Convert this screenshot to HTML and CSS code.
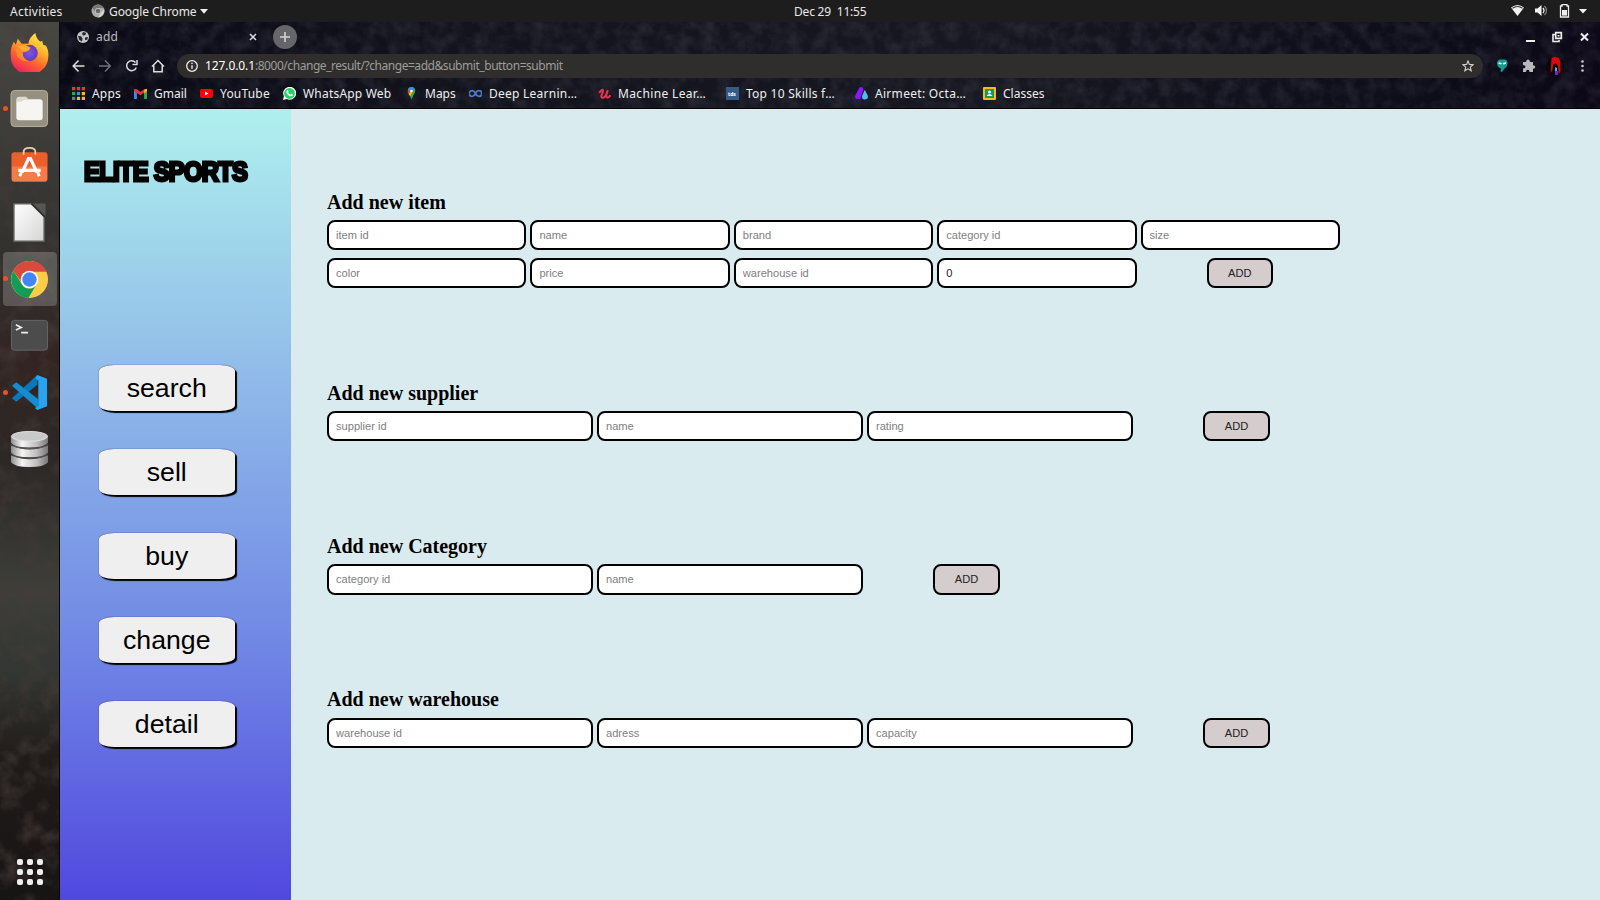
FILE: index.html
```html
<!DOCTYPE html>
<html lang="en">
<head>
<meta charset="utf-8">
<title>add</title>
<link rel="stylesheet" href="styles.css">
</head>
<body>
<div class="desktop">
  <header class="topbar">
    <span class="activities">Activities</span>
    <svg class="app-icon" viewBox="0 0 14 14"><circle cx="7" cy="7" r="6.5" fill="#aaa"/><path d="M1.4 3.8A6.5 6.5 0 0 1 12.7 4H7L4.5 8.7z" fill="#777"/><path d="M13 5a6.5 6.5 0 0 1-6 8.500l3-5z" fill="#d2d2d2"/><circle cx="7" cy="7" r="3" fill="#c9c9c9"/><circle cx="7" cy="7" r="2.300" fill="#686868"/></svg>
    <span class="app-name">Google Chrome</span>
    <svg class="app-arrow" viewBox="0 0 8 5"><path d="M0 0h8L4 4.800z" fill="#f0f0f0"/></svg>
    <span class="clock">Dec 29&nbsp; 11:55</span>
    <svg class="tray" viewBox="0 0 80 16">
      <path d="M1 4.500Q7.500-.5 14 4.500L7.500 13z" fill="#f2f2f2"/><path d="M2.500 5.300Q7.500 1.700 12.500 5.300" fill="none" stroke="#333" stroke-width="1.100"/>
      <path d="M25 5.500h2.500L31.500 2v11l-4-3.500H25z" fill="#f2f2f2"/><path d="M33 5q2 2.500 0 5" fill="none" stroke="#eee" stroke-width="1.300"/><path d="M34.500 3q4 4.500 0 9" fill="none" stroke="#888" stroke-width="1.200"/>
      <path d="M52 1.700h5v1.300h1.500v11h-8V3H52z" fill="none" stroke="#eee" stroke-width="1.300"/><path d="M52 7h5v5.600h-5z" fill="#eee"/>
      <path d="M69 6h8l-4 4.500z" fill="#f2f2f2"/>
    </svg>
  </header>
  <div class="workspace">
    <nav class="dock">
      <svg class="texture" width="59" height="878"><filter id="stone" x="0" y="0" width="1" height="1"><feTurbulence type="fractalNoise" baseFrequency=".05" numOctaves="5" seed="8"/><feColorMatrix values="0 0 0 0 .06  0 0 0 0 .045  0 0 0 0 .04  1.600 0 0 0 -.72"/></filter><rect width="59" height="878" filter="url(#stone)"/></svg>
      <div class="slot"><svg viewBox="0 0 40 40"><defs><linearGradient id="ff" x1=".8" y1="0" x2=".3" y2="1"><stop offset="0" stop-color="#fff04a"/><stop offset=".35" stop-color="#ffb52b"/><stop offset=".65" stop-color="#ff642d"/><stop offset="1" stop-color="#ed1b67"/></linearGradient><radialGradient id="fp"><stop offset="0" stop-color="#7d55f0"/><stop offset="1" stop-color="#673ab7"/></radialGradient></defs><path d="M4 9l2 3 2-6 4 5 7 0q0-6 7-11 1 6 5 9l2-1 1 4 3 1q3 5 2.300 11A19 18.500 0 0 1 .8 24Q0 15 4 9z" fill="url(#ff)"/><circle cx="20" cy="20.500" r="8.500" fill="url(#fp)"/><path d="M6 14q4-3 9-2l6 3q-1 4-8 5 0 7 7 9-9 1-13-6z" fill="#ff8a2d"/><path d="M8 13q7-2 13 2-1 3-8 4z" fill="#ffab38"/></svg></div>
      <div class="slot"><i class="dot"></i><svg viewBox="0 0 40 40"><rect x="1" y="1.500" width="37.500" height="37" rx="4" fill="#969080" stroke="#b7b09d"/><rect x="6.500" y="10.500" width="27" height="21.500" rx="3" fill="#f6f5f2"/><path d="M6.500 12V11q0-3 3-3h7l3 3h-5q-2 2-4 2h-4z" fill="#dedad0"/></svg></div>
      <div class="slot bag"><svg viewBox="0 0 40 40"><rect x="1.500" y="7.500" width="37" height="30" rx="3" fill="#ec5f2b"/><path d="M2 22h36v13q0 2.500-3 2.500H4q-2 0-2-2z" fill="#f37c4b"/><path d="M14 10V7q0-4 6-4t6 4v3" fill="none" stroke="#e3d3ae" stroke-width="1.800"/><path d="M12.500 28l6.500-14h2l6.500 14M8.500 26h23" fill="none" stroke="#fff" stroke-width="3.300"/><path d="M12 27l-2 5M28 27l2 5" stroke="#fff" stroke-width="3"/></svg></div>
      <div class="slot"><svg viewBox="0 0 40 40"><defs><linearGradient id="pp" x2="1" y2="1"><stop stop-color="#fff"/><stop offset="1" stop-color="#d5d5d5"/></linearGradient></defs><path d="M4 .700h19l12 13v25.500H4z" fill="url(#pp)" stroke="#5f5f5b" stroke-width="1.500"/><path d="M22 .5h14.500v14z" fill="#575753"/><path d="M22 .5l14 14" stroke="#30302e" stroke-width="2"/></svg></div>
      <div class="slot active"><i class="dot"></i><svg viewBox="0 0 40 40"><circle cx="20" cy="20" r="19" fill="#ffcc48"/><path d="M3.500 11A19 19 0 0 1 37.500 12H20a8.500 8.500 0 0 0-8 11z" fill="#d84a3c"/><path d="M3.500 11A19 19 0 0 0 19 39l8-14a8.500 8.500 0 0 1-15-.5z" fill="#109d58"/><circle cx="20" cy="20" r="9" fill="#fff"/><circle cx="20" cy="20" r="7.400" fill="#4385f5"/></svg></div>
      <div class="slot"><svg viewBox="0 0 40 40"><rect x="1.500" y="4.500" width="37" height="30.500" rx="3" fill="#4c4c4c" stroke="#666"/><path d="M6 9l5.500 2.700L6 14.400M11.500 17h7" fill="none" stroke="#eee" stroke-width="1.700"/></svg></div>
      <div class="slot"><i class="dot"></i><svg viewBox="0 0 40 40"><path d="M28 2v10L6.500 29.500 2 26z" fill="#0879bd"/><path d="M2 13l4.500-3.500L29 27v10z" fill="#168bd0"/><path d="M28 2l10 4v28l-10 4-2.500-2 3.500-2V8l-3-3z" fill="#27a4ef"/></svg></div>
      <div class="slot"><svg viewBox="0 0 40 40"><defs><linearGradient id="db"><stop stop-color="#8e8e8e"/><stop offset=".3" stop-color="#f5f5f5"/><stop offset=".7" stop-color="#bdbdbd"/><stop offset="1" stop-color="#777"/></linearGradient></defs><g fill="url(#db)"><path d="M1 26q19 8 38 0v7q-4 5-19 5T1 33z"/><path d="M1 16q19 8 38 0v7q-4 5-19 5T1 23z"/><path d="M1 6h38v7q-4 5-19 5T1 13z"/></g><ellipse cx="20" cy="6.500" rx="18.500" ry="5" fill="#c8c8c8" stroke="#e2e2e2"/><path d="M1 14q3 5 19 5t19-5M1 24q3 5 19 5t19-5" fill="none" stroke="#666" stroke-width=".8"/></svg></div>
      <div class="launcher"><b></b><b></b><b></b><b></b><b></b><b></b><b></b><b></b><b></b></div>
    </nav>
    <div class="browser">
      <div class="chrome">
        <svg class="texture" width="1540" height="86"><filter id="night" x="0" y="0" width="1" height="1"><feTurbulence type="fractalNoise" baseFrequency=".07" numOctaves="5" seed="3"/><feColorMatrix values="0 0 0 0 .19  0 0 0 0 .2  0 0 0 0 .25  1.300 0 0 0 -.45"/></filter><rect width="1540" height="86" filter="url(#night)" opacity=".28"/></svg>
        <div class="tabs">
          <svg class="globe" viewBox="0 0 12 12"><circle cx="6" cy="6" r="6" fill="#c4c4c6"/><path d="M1 5l3 .3 1.500 2L5 10.500 2.300 9zM6 1l3 .7L8.500 4 6 4.500 5 3zM8 6.500l3-.5-.7 2.700L8 9z" fill="#26262e"/></svg>
          <span class="tab-title">add</span>
          <svg class="tab-close" viewBox="0 0 8 8"><path d="M1 1l6 6M7 1L1 7" stroke="#ddd" stroke-width="1.500"/></svg>
          <span class="new-tab"><svg viewBox="0 0 24 24"><path d="M12 7v10M7 12h10" stroke="#d4d4d4" stroke-width="1.600"/></svg></span>
          <svg class="window-controls" viewBox="0 0 66 14"><path d="M1 11h9" stroke="#eee" stroke-width="2"/><path d="M30 4.500h-2v7h6V10" stroke="#eee" stroke-width="1.600" fill="none"/><path d="M30.700 2.700h5.600v5.600h-5.600z" stroke="#eee" stroke-width="1.700" fill="none"/><path d="M32.500 5h2v1.500h-2z" fill="#eee"/><path d="M56 3.500l7 7M63 3.500l-7 7" stroke="#eee" stroke-width="2"/></svg>
        </div>
        <div class="toolbar">
          <svg class="nav-icons" viewBox="0 0 96 16" fill="none" stroke-width="1.500"><path d="M13.500 8H2.500M7.500 2.500L2.200 8l5.300 5.500" stroke="#ddd"/><path d="M28 8h11M34 2.500L39.300 8 34 13.500" stroke="#707078"/><path d="M64.500 4.500a5 5 0 1 0 .8 5M66 2v4.500h-4.500" stroke="#ddd"/><path d="M81 8.500L87 2.500l6 6M82.800 7.500v6.300h8.400V7.500" stroke="#ddd"/></svg>
          <div class="address">
            <svg class="info" viewBox="0 0 12 12"><circle cx="6" cy="6" r="5.300" fill="none" stroke="#eee" stroke-width="1.300"/><path d="M6 5.200v3.600M6 2.700v1.400" stroke="#eee" stroke-width="1.400"/></svg>
            <span class="url"><em>127.0.0.1</em>:8000/change_result/?change=add&amp;submit_button=submit</span>
            <svg class="star" viewBox="0 0 12 12"><path d="M6 .9l1.400 3.500 3.800.3-2.900 2.400.9 3.700L6 8.800l-3.200 2 .9-3.700L.8 4.700l3.800-.3z" fill="none" stroke="#d0d0d0" stroke-width="1.100"/></svg>
          </div>
          <svg class="extensions" viewBox="0 0 92 20"><path d="M6 3.500h4q3.500 0 3.500 3.500t-3 5.500l-2.500 3.500-1.500-.5.5-3Q3 11 3 7.500T6 3.500z" fill="#169b8c"/><path d="M4.500 7l3 .8M12 7l-3 .8" stroke="#fff" stroke-width="1.500"/><path d="M29 6h3q0-2.500 2-2.500T36 6h3v3.200q2.300 0 2.300 1.800T39 12.700V16h-3.500q0-2.300-1.700-2.300T32 16h-3v-3.500q2.500 0 2.500-1.700T29 9z" fill="#b8b8bb"/><circle cx="61.500" cy="10" r="9" fill="#070609"/><path d="M57.500 2Q61 0 65 2l1.500 4V16l-2 2-.5-8-2.500-3-2.500 2-.5 5-2 3z" fill="#d8090f"/><path d="M61 11l2 1v4l-2 1z" fill="#28c6e6"/><path d="M61 15h3v4h-3z" fill="#6229cf"/><g fill="#c8c8c8"><circle cx="88.500" cy="5.500" r="1.300"/><circle cx="88.500" cy="10" r="1.300"/><circle cx="88.500" cy="14.500" r="1.300"/></g></svg>
        </div>
        <div class="bookmarks">
          <a class="bm apps"><svg viewBox="0 0 12 12"><path d="M0 0h3v3H0zM4.500 0h3v3h-3zM9 0h3v3H9z" fill="#ea3535"/><path d="M0 4.500h3v3H0z" fill="#2da94f"/><path d="M4.500 4.500h3v3h-3z" fill="#4285f4"/><path d="M9 4.500h3v3H9zM4.500 9h3v3h-3zM9 9h3v3H9z" fill="#f4b72b"/><path d="M0 9h3v3H0z" fill="#2da94f"/></svg><span>Apps</span></a>
          <a class="bm gmail"><svg viewBox="0 0 12 12"><path d="M0 3l2.700 2v6H0z" fill="#4285f4"/><path d="M12 3L9.300 5v6H12z" fill="#34a853"/><path d="M0 1.800L2.700 2 6 4.700 9.300 2V5L6 7.700 2.700 5.500 0 3.500z" fill="#ea3535"/><path d="M9.300 2.300l2.700-.7v2L9.300 6z" fill="#fbbc04"/></svg><span>Gmail</span></a>
          <a class="bm youtube"><svg viewBox="0 0 13 12"><rect y="1.500" width="13" height="9" rx="2" fill="#f00"/><path d="M5 4v4l3.500-2z" fill="#fff"/></svg><span>YouTube</span></a>
          <a class="bm whatsapp"><svg viewBox="0 0 14 14"><path d="M0 14l1-4A7 7 0 1 1 4 13z" fill="#fff"/><circle cx="7" cy="7" r="5.800" fill="#25d366"/><path d="M4.500 3.500q1-.5 1.500 1.500l-.5 1q1 2 2.500 2.300l1-1q2 .8 1.500 1.500-1 2-3.500.8Q3 7.500 3.800 4.500z" fill="#fff"/></svg><span>WhatsApp Web</span></a>
          <a class="bm maps"><svg viewBox="0 0 12 14"><path d="M2 4a4 4 0 0 1 8 0q0 3-2 5l-2 4.500L4 9Q2 7 2 4z" fill="#34a853"/><path d="M2.500 2.500A4 4 0 0 1 9 1.300L5 6z" fill="#4285f4"/><path d="M2.500 2.500L5 4.500 3 7.500Q1.400 5 2.500 2.500z" fill="#ea4335"/><path d="M3 7.500L5 5l2 1-2.500 4z" fill="#fbbc04"/><circle cx="6" cy="4.300" r="1.400" fill="#fff"/></svg><span>Maps</span></a>
          <a class="bm deep"><svg viewBox="0 0 13 12"><path d="M6.500 6Q5 3 3 3.200a2.800 2.800 0 0 0 0 5.600Q5 9 6.500 6T10 3.200a2.800 2.800 0 0 1 0 5.600Q8 9 6.500 6" fill="none" stroke="#4d78c8" stroke-width="1.800"/></svg><span>Deep Learnin…</span></a>
          <a class="bm machine"><svg viewBox="0 0 12 12"><path d="M1 5.500Q4 1.500 4.500 3T3 8q0 3 2.500 1.500T9 3Q7 8 8 9.500q1.500 1 3.500-2" fill="none" stroke="#ec3148" stroke-width="1.900"/></svg><span>Machine Lear…</span></a>
          <a class="bm skills"><svg viewBox="0 0 13 13"><rect width="13" height="13" fill="#355c86"/><text x="2" y="8.500" class="tds">tds</text></svg><span>Top 10 Skills f…</span></a>
          <a class="bm airmeet"><svg viewBox="0 0 14 14"><path d="M6 0q3 0 3 3L5.500 13H2q-3-1-1.500-4L4.500 1z" fill="#8719ff"/><path d="M10.500 3l3 6q1.500 4-3 4.500Q6.500 13 8 9z" fill="#4fbdf6"/></svg><span>Airmeet: Octa…</span></a>
          <a class="bm classes"><svg viewBox="0 0 13 13"><rect width="13" height="13" rx="1" fill="#f6bd16"/><rect x="2" y="2" width="9" height="9" fill="#19995b"/><circle cx="6.500" cy="5" r="1.500" fill="#fff"/><path d="M3.500 9q3-4 6 0z" fill="#fff"/></svg><span>Classes</span></a>
        </div>
      </div>
      <div class="page">
        <aside class="sidebar">
          <h1>ELITE SPORTS</h1>
          <div class="menu"><button>search</button><button>sell</button><button>buy</button><button>change</button><button>detail</button></div>
        </aside>
        <main>
          <section class="item">
            <h2>Add new item</h2>
            <div class="row"><input placeholder="item id"><input placeholder="name"><input placeholder="brand"><input placeholder="category id"><input placeholder="size"></div>
            <div class="row"><input placeholder="color"><input placeholder="price"><input placeholder="warehouse id"><input value="0"><button class="add">ADD</button></div>
          </section>
          <section>
            <h2>Add new supplier</h2>
            <div class="row"><input placeholder="supplier id"><input placeholder="name"><input placeholder="rating"><button class="add">ADD</button></div>
          </section>
          <section>
            <h2>Add new Category</h2>
            <div class="row"><input placeholder="category id"><input placeholder="name"><button class="add">ADD</button></div>
          </section>
          <section>
            <h2>Add new warehouse</h2>
            <div class="row"><input placeholder="warehouse id"><input placeholder="adress"><input placeholder="capacity"><button class="add">ADD</button></div>
          </section>
        </main>
      </div>
    </div>
  </div>
</div>
</body>
</html>
```
FILE: styles.css
```css
* { box-sizing: border-box; }
body { margin: 0; overflow: hidden; font-family: "Noto Sans", sans-serif; }
svg { display: block; flex: none; }
.desktop { width: 1600px; height: 900px; display: flex; flex-direction: column; }

.topbar { height: 22px; flex: none; background: #1d1d1d; color: #e8e8e8; display: flex; align-items: center; font-size: 12px; white-space: nowrap; }
.activities { margin-left: 10px; width: 81px; letter-spacing: .25px; }
.app-icon { width: 14px; height: 14px; }
.app-name { margin-left: 4px; width: 91px; letter-spacing: -.08px; }
.app-arrow { width: 8px; height: 5px; }
.clock { margin-left: 586px; width: 90px; letter-spacing: -.2px; }
.tray { width: 80px; height: 16px; margin-left: 626px; }

.workspace { flex: 1; display: flex; min-height: 0; }
.texture { position: absolute; top: 0; left: 0; }
.dock { width: 60px; flex: none; position: relative; border-right: 1px solid #080808; background: linear-gradient(#484843, #3a3937 16%, #302e2b 30%, #332422 38%, #2c2825 50%, #3d3e3a 65%, #333632 74%, #201b19 84%, #171414); display: flex; flex-direction: column; align-items: center; gap: 2.750px; padding-top: 3px; }
.slot { width: 54px; height: 54px; flex: none; border-radius: 4px; display: flex; align-items: center; justify-content: center; position: relative; }
.slot svg { width: 39px; height: 39px; }
.bag { padding-bottom: 3px; }
.slot.active { background: rgba(255,255,255,.2); }
.dot { position: absolute; left: 0; top: 24px; width: 5px; height: 5px; border-radius: 50%; background: #e95420; }
.launcher { position: relative; margin-top: auto; margin-bottom: 15px; display: grid; grid-template-columns: repeat(3, 6px); gap: 4px; }
.launcher b { width: 6px; height: 6px; border-radius: 2px; background: #eee; }

.browser { flex: 1; min-width: 0; display: flex; flex-direction: column; }
.chrome { height: 87px; flex: none; position: relative; background: linear-gradient(90deg, #090815, #13131d 25%, #171721 60%, #0e0e1a 85%, #0c0817); border-bottom: 1px solid #000; color: #eee; display: flex; flex-direction: column; }
.chrome > div { position: relative; display: flex; align-items: center; }
.tabs { height: 29px; }
.globe { width: 12px; height: 12px; margin-left: 17px; }
.tab-title { margin-left: 7px; width: 153px; font-size: 12px; letter-spacing: .2px; color: #bbb; }
.tab-close { width: 8px; height: 8px; }
.new-tab { width: 24px; height: 24px; border-radius: 50%; background: #66666a; margin-left: 16px; }
.window-controls { width: 66px; height: 14px; margin-left: 1228px; }
.toolbar { height: 29px; }
.nav-icons { width: 96px; height: 16px; margin-left: 11px; }
.address { width: 1306px; height: 24px; margin-left: 10px; border-radius: 12px; background: #2f2e2c; display: flex; align-items: center; padding-left: 9px; }
.info { width: 12px; height: 12px; }
.url { margin-left: 7px; width: 1257px; font-size: 12px; letter-spacing: -.45px; color: #9c9c9c; white-space: nowrap; }
.url em { font-style: normal; color: #fff; letter-spacing: -.1px; }
.star { width: 12px; height: 12px; }
.extensions { width: 92px; height: 20px; margin-left: 11px; }
.bookmarks { height: 26px; }
.bm { display: flex; align-items: center; gap: 7px; font-size: 12px; white-space: nowrap; }
.bm svg { width: 13px; height: 13px; }
.apps { margin-left: 12px; width: 62px; letter-spacing: .2px; }
.gmail { width: 66px; }
.youtube { width: 83px; letter-spacing: .2px; }
.whatsapp { width: 122px; letter-spacing: .2px; }
.maps { width: 64px; }
.deep { width: 129px; letter-spacing: .25px; }
.machine { width: 128px; letter-spacing: .35px; }
.skills { width: 129px; letter-spacing: .25px; }
.airmeet { width: 128px; letter-spacing: .3px; }
.tds { font: bold 5px "Noto Sans", sans-serif; letter-spacing: 0; fill: #fff; }

.page { flex: 1; min-height: 0; display: flex; background: #daebef; }
.sidebar { width: 231px; flex: none; background: linear-gradient(#aff0ee, #91bce9 33%, #728ae5 66%, #5148df); }
h1 { margin: 45px 0 0 24px; height: 36px; width: 185px; font: bold 27px/36px "Liberation Sans", Arial, sans-serif; letter-spacing: -.8px; white-space: nowrap; color: #000; -webkit-text-stroke: 3px #000; transform-origin: left; transform: scaleX(.88); }
.menu { padding: 175px 0 0 39px; display: flex; flex-direction: column; gap: 38.100px; }
.menu button { width: 135.500px; height: 46px; padding: 0; border: 0; border-radius: 15px / 6px; background: #efefef; box-shadow: 2px 2px 1px #000, 0 0 1px #000; font: 26.700px "Liberation Sans", Arial, sans-serif; color: #000; }
main { padding: 80px 0 0 36px; }
section { height: 153.300px; }
section.item { height: 190.800px; }
h2 { margin: 0 0 5.200px; font: bold 20px/26px "Liberation Serif", "Times New Roman", serif; color: #000; }
.row { display: flex; gap: 4px; margin-bottom: 7.300px; }
input, .add { height: 30.300px; border: 2px solid #000; border-radius: 8px; font: 11.100px "Liberation Sans", Arial, sans-serif; color: #222; }
input { width: 266px; padding: 0 7px; background: #fff; }
.item input { width: 199.400px; }
input::placeholder { color: #808080; }
.add { width: 66.300px; padding: 0; margin-left: 66.400px; background: #d5cccd; border-color: #000; }
.item .add { margin-left: 66px; }
```
